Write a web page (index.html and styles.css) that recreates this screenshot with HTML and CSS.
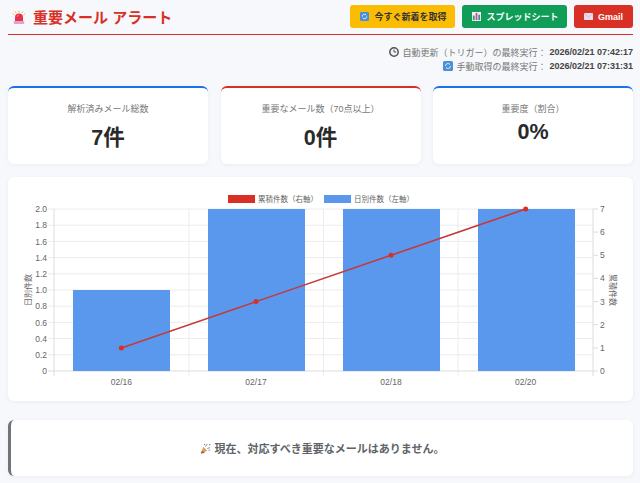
FILE: index.html
```html
<!DOCTYPE html>
<html lang="ja">
<head>
<meta charset="utf-8">
<title>重要メール アラート</title>
<link rel="stylesheet" href="styles.css">
</head>
<body>
<header class="header">
  <h1 class="title">
    <svg class="siren" viewBox="0 0 14 14"><path d="M2.500 5 .8 3.500M11.500 5 13.200 3.500M7 2.500V.5M4 3 3 1.300M10 3 11 1.300" stroke="#eeb04a" stroke-width=".9"/><path d="M3 11.200V7.500a4 4 0 0 1 8 0v3.700z" fill="#e8324a"/><path d="M5 7a2 2 0 0 1 2-2" stroke="#f58a98" stroke-width=".8" fill="none"/><rect x="1.800" y="11" width="10.400" height="3" rx=".6" fill="#dca6d0"/></svg>
    <span>重要メール アラート</span>
  </h1>
  <nav class="actions">
    <a class="btn btn-yellow"><svg class="ico" viewBox="0 0 10 10"><rect width="10" height="10" rx="1.500" fill="#4a90d9"/><path d="M2.500 5a2.500 2.500 0 0 1 4.500-1.500M7.500 5A2.500 2.500 0 0 1 3 6.500" stroke="#e6f0fa" fill="none"/></svg>今すぐ新着を取得</a>
    <a class="btn btn-green"><svg class="ico" viewBox="0 0 10 10"><rect width="10" height="10" fill="#eef2f2"/><rect x="1" y="4" width="2" height="5" fill="#3d9a6a"/><rect x="4" y="1" width="2" height="8" fill="#d9506a"/><rect x="7" y="3" width="2" height="6" fill="#4a80c9"/></svg>スプレッドシート</a>
    <a class="btn btn-red"><svg class="ico" viewBox="0 0 10 8"><rect width="10" height="8" rx=".6" fill="#eadcec"/><path d="M0 .5 5 4.500 10 .5" stroke="#c9a9c9" stroke-width=".7" fill="none"/></svg>Gmail</a>
  </nav>
</header>

<section class="status">
  <p class="status-line"><svg class="ico-s" viewBox="0 0 10 10"><circle cx="5" cy="5" r="4.200" fill="#f1f1f4" stroke="#555" stroke-width="1.500"/><path d="M5 2.500V5h2.200" stroke="#555" fill="none"/></svg>自動更新（トリガー）の最終実行：<b>2026/02/21 07:42:17</b></p>
  <p class="status-line"><svg class="ico-s" viewBox="0 0 10 10"><rect width="10" height="10" rx="1.500" fill="#4a90d9"/><path d="M2.500 5a2.500 2.500 0 0 1 4.500-1.500M7.500 5A2.500 2.500 0 0 1 3 6.500" stroke="#e6f0fa" fill="none"/></svg>手動取得の最終実行：<b>2026/02/21 07:31:31</b></p>
</section>

<section class="stats">
  <div class="stat stat-blue"><div class="stat-label">解析済みメール総数</div><div class="stat-value">7件</div></div>
  <div class="stat stat-red"><div class="stat-label">重要なメール数（70点以上）</div><div class="stat-value">0件</div></div>
  <div class="stat stat-blue"><div class="stat-label">重要度（割合）</div><div class="stat-value">0%</div></div>
</section>

<section class="chart-card">
  <svg class="chart" viewBox="8 177 625 224" width="625" height="224">
    <g class="grid">
      <path d="M48 209H593M48 225.200H593M48 241.400H593M48 257.600H593M48 273.800H593M48 290H593M48 306.200H593M48 322.400H593M48 338.600H593M48 354.800H593"/>
      <path d="M189 209V376M323.500 209V376M458 209V376"/>
    </g>
    <path class="axis" d="M54 209V376M593 209V376M48 371H598M593 209H598M593 232.100H598M593 255.300H598M593 278.400H598M593 301.600H598M593 324.700H598M593 347.900H598"/>
    <g class="bars">
      <rect x="73" y="290" width="97" height="81"/>
      <rect x="208" y="209" width="97" height="162"/>
      <rect x="343" y="209" width="97" height="162"/>
      <rect x="478" y="209" width="97" height="162"/>
    </g>
    <polyline class="line" points="121.400,348 256,301.600 391,255.300 525.700,209"/>
    <g class="dots">
      <circle cx="121.400" cy="348" r="2.500"/><circle cx="256" cy="301.600" r="2.500"/><circle cx="391" cy="255.300" r="2.500"/><circle cx="525.700" cy="209" r="2.500"/>
    </g>
    <g class="tick tick-end">
      <text x="47" y="212">2.0</text><text x="47" y="228">1.8</text><text x="47" y="244.500">1.6</text><text x="47" y="260.500">1.4</text><text x="47" y="277">1.2</text><text x="47" y="293">1.0</text><text x="47" y="309">0.8</text><text x="47" y="325.500">0.6</text><text x="47" y="341.500">0.4</text><text x="47" y="358">0.2</text><text x="47" y="374">0</text>
    </g>
    <g class="tick">
      <text x="600" y="212">7</text><text x="600" y="235">6</text><text x="600" y="258.300">5</text><text x="600" y="281.400">4</text><text x="600" y="304.600">3</text><text x="600" y="327.700">2</text><text x="600" y="351">1</text><text x="600" y="374">0</text>
    </g>
    <g class="tick tick-mid">
      <text x="121.400" y="385">02/16</text><text x="256" y="385">02/17</text><text x="391" y="385">02/18</text><text x="525.700" y="385">02/20</text>
    </g>
    <text class="axis-title" transform="translate(31 290) rotate(-90)">日別件数</text>
    <text class="axis-title" transform="translate(610 290) rotate(90)">累積件数</text>
    <rect class="swatch-red" x="228" y="195" width="27" height="8"/>
    <text class="legend" x="258" y="202">累積件数（右軸）</text>
    <rect class="swatch-blue" x="324" y="195" width="27" height="8"/>
    <text class="legend" x="354" y="202">日別件数（左軸）</text>
  </svg>
</section>

<section class="notice">
  <svg class="party" viewBox="0 0 12 12"><path d="M1 11.500 3.500 4 8 8.500z" fill="#e0a050"/><path d="M2 8.500 5.500 11 1 11.500z" fill="#a04a6a"/><path d="M6 4 8 1M8 6l3-1" stroke="#5a8ad9"/><circle cx="5" cy="1.500" r=".8" fill="#d9506a"/><circle cx="10.500" cy="2" r=".8" fill="#6aa84f"/><circle cx="10" cy="8" r=".8" fill="#b070c0"/></svg>
  <span>現在、対応すべき重要なメールはありません。</span>
</section>
</body>
</html>
```
FILE: styles.css
```css
* { box-sizing: border-box; }
html, body { margin: 0; height: 100%; }
body {
  padding: 5px 7px 0 8px;
  background: #f6f8fb;
  font-family: "Liberation Sans", "Noto Sans CJK JP", sans-serif;
  color: #333;
  overflow: hidden;
}
.header {
  display: flex;
  justify-content: space-between;
  align-items: center;
  height: 30px;
  padding-bottom: 6px;
  border-bottom: 1.5px solid #d93025;
}
.title {
  display: flex;
  align-items: center;
  gap: 7px;
  margin: 0 0 0 4px;
  font-size: 15px;
  font-weight: 700;
  color: #d93025;
}
.siren { width: 14px; height: 14px; }
.actions { display: flex; gap: 7px; }
.btn {
  display: flex;
  align-items: center;
  justify-content: center;
  gap: 5px;
  height: 23px;
  border-radius: 3px;
  font-size: 9px;
  font-weight: 700;
  color: #fff;
}
.btn-yellow { width: 105px; padding-left: 2px; background: #fbbc04; color: #333; }
.btn-green { width: 105px; padding-left: 2px; background: #0f9d58; }
.btn-red { width: 59px; background: #d93025; }
.ico { width: 9px; height: 9px; flex: none; }
.status { margin-top: 10px; }
.status-line {
  display: flex;
  justify-content: flex-end;
  align-items: center;
  gap: 3px;
  margin: 0;
  height: 14px;
  font-size: 9px;
  color: #777;
  white-space: pre;
}
.status-line b { color: #444; }
.ico-s { width: 10px; height: 10px; flex: none; }
.stats {
  display: grid;
  grid-template-columns: repeat(3, 1fr);
  gap: 12.500px;
  margin-top: 13px;
}
.stat {
  height: 78px;
  padding-top: 14px;
  background: #fff;
  border-top: 2px solid #1a73e8;
  border-radius: 6px;
  box-shadow: 0 1px 4px rgba(0, 0, 0, .05);
  text-align: center;
}
.stat-blue { border-top-color: #1a73e8; }
.stat-red { border-top-color: #d93025; }
.stat-label { font-size: 9px; color: #777; }
.stat-value { margin-top: 5px; font-size: 21.500px; font-weight: 700; color: #2a2a2a; }
.chart-card {
  margin-top: 13px;
  background: #fff;
  border-radius: 6px;
  box-shadow: 0 1px 4px rgba(0, 0, 0, .05);
}
.chart { display: block; }
.grid path { stroke: #ececec; stroke-width: 1; fill: none; }
.axis { stroke: #dcdcdc; stroke-width: 1; fill: none; }
.bars rect { fill: #5a98ee; }
.line { fill: none; stroke: #c5393a; stroke-width: 1.500; }
.dots circle { fill: #d93025; }
.tick text { font-size: 8.500px; fill: #666; }
.tick-end text { text-anchor: end; }
.tick-mid text { text-anchor: middle; }
.axis-title { font-size: 8px; fill: #666; text-anchor: middle; }
.legend { font-size: 7.500px; fill: #666; }
.swatch-red { fill: #d93025; }
.swatch-blue { fill: #5a98ee; }
.notice {
  display: flex;
  align-items: center;
  justify-content: center;
  gap: 4px;
  height: 56px;
  margin-top: 19px;
  background: #fff;
  border-left: 3px solid #70757a;
  border-radius: 6px;
  box-shadow: 0 1px 4px rgba(0, 0, 0, .05);
  font-size: 11px;
  font-weight: 700;
  color: #5f6368;
}
.party { width: 11px; height: 11px; }
```
